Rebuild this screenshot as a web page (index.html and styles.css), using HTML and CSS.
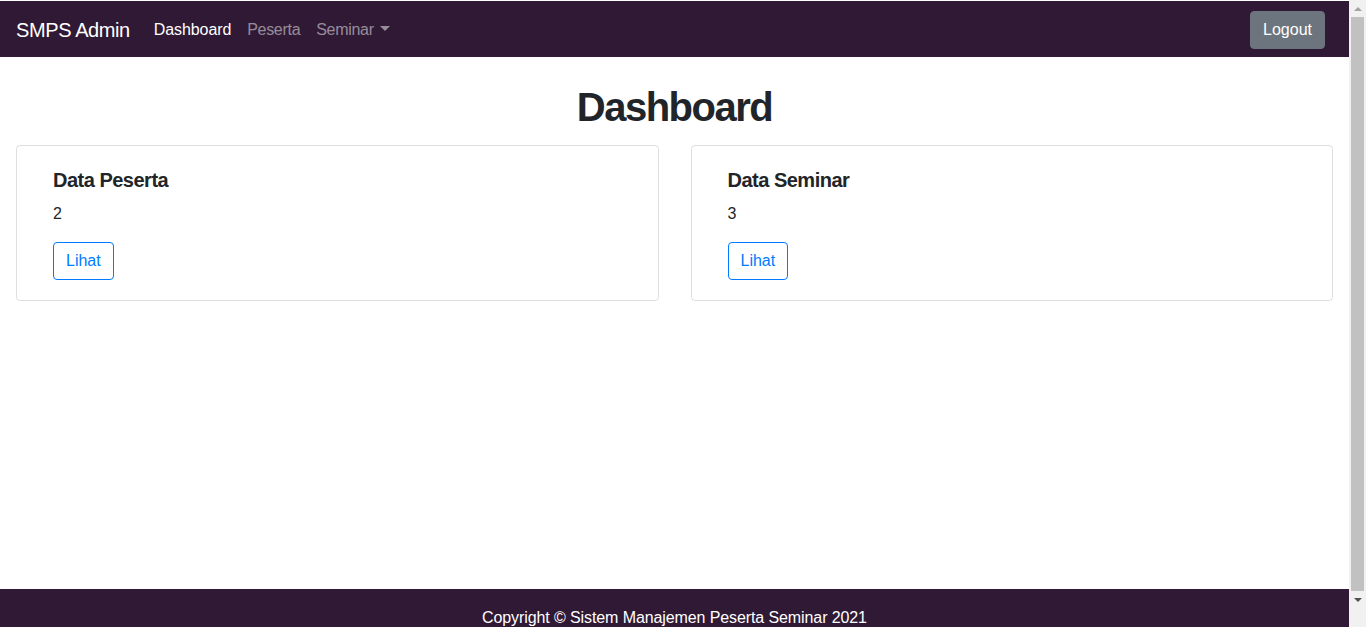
FILE: index.html
```html
<!DOCTYPE html>
<html lang="id">
<head>
<meta charset="utf-8">
<title>SMPS Admin - Dashboard</title>
<link rel="stylesheet" href="styles.css">
</head>
<body>
<nav class="navbar">
  <a class="brand" href="#">SMPS Admin</a>
  <ul class="nav">
    <li><a class="nav-link active" href="#">Dashboard</a></li>
    <li><a class="nav-link" href="#">Peserta</a></li>
    <li><a class="nav-link dropdown-toggle" href="#">Seminar</a></li>
  </ul>
  <button class="btn btn-secondary">Logout</button>
</nav>
<main class="main">
  <h1 class="page-title">Dashboard</h1>
  <div class="cards">
    <div class="card">
      <h5 class="card-title">Data Peserta</h5>
      <p class="card-text">2</p>
      <a class="btn btn-outline" href="#">Lihat</a>
    </div>
    <div class="card">
      <h5 class="card-title">Data Seminar</h5>
      <p class="card-text">3</p>
      <a class="btn btn-outline" href="#">Lihat</a>
    </div>
  </div>
</main>
<footer class="footer">
  <p>Copyright &copy; Sistem Manajemen Peserta Seminar 2021</p>
</footer>
<div class="scrollbar" aria-hidden="true">
  <span class="sb-arrow sb-up"></span>
  <span class="sb-thumb"></span>
  <span class="sb-arrow sb-down"></span>
</div>
</body>
</html>
```

FILE: styles.css
```css
* { box-sizing: border-box; }
html { scrollbar-width: none; }
html::-webkit-scrollbar { display: none; }
body {
  margin: 0;
  padding: 1px 17px 0 0;
  font-family: "Liberation Sans", Arial, sans-serif;
  font-size: 16px;
  line-height: 1.5;
  color: #212529;
  background: #fff;
}
a { text-decoration: none; }

.navbar {
  background: #2f1935;
  height: 56px;
  display: flex;
  align-items: center;
  padding: 1px 24px 0 16px;
}
.brand {
  color: #fff;
  font-size: 20px;
  line-height: 30px;
  margin-right: 16px;
  letter-spacing: -0.4px;
}
.nav {
  display: flex;
  list-style: none;
  margin: 0;
  padding: 0;
  flex: 1;
}
.nav-link {
  display: block;
  padding: 8px;
  color: rgba(255,255,255,.5);
  letter-spacing: -0.3px;
}
.nav-link.active { color: #fff; letter-spacing: -0.1px; }
.dropdown-toggle::after {
  content: "";
  display: inline-block;
  margin-left: 6px;
  vertical-align: 4px;
  border-top: 5px solid;
  border-left: 5px solid transparent;
  border-right: 5px solid transparent;
}

.btn {
  display: inline-block;
  font-family: inherit;
  font-size: 16px;
  line-height: 24px;
  padding: 6px 12px;
  border: 1px solid transparent;
  border-radius: 4px;
  cursor: pointer;
}
.btn-secondary {
  background: #6c757d;
  border-color: #6c757d;
  color: #fff;
}
.btn-outline {
  color: #007bff;
  border-color: #007bff;
  background: transparent;
}

.main {
  min-height: 532px;
  padding: 26px 16px 0;
}
.page-title {
  margin: 0 0 14px;
  text-align: center;
  font-size: 40px;
  line-height: 48px;
  font-weight: 700;
  letter-spacing: -1.5px;
}
.cards {
  display: grid;
  grid-template-columns: 1fr 1fr;
  gap: 32px;
}
.card {
  border: 1px solid rgba(0,0,0,.125);
  border-radius: 4px;
  padding: 20px 36px;
}
.card-title {
  margin: 0 0 10px;
  padding-top: 2px;
  font-size: 20px;
  line-height: 24px;
  font-weight: 700;
  letter-spacing: -0.5px;
}
.card-text { margin: 0 0 16px; }

.footer {
  background: #2f1935;
  color: #fff;
  text-align: center;
  padding: 17px 16px 16px;
  letter-spacing: -0.1px;
}
.footer p { margin: 0; }

.scrollbar {
  position: fixed;
  top: 0;
  right: 0;
  width: 17px;
  height: 100vh;
  background: #f1f1f1;
  display: flex;
  flex-direction: column;
  align-items: center;
}
.sb-arrow {
  height: 17px;
  width: 17px;
  display: flex;
  align-items: center;
  justify-content: center;
}
.sb-arrow::before {
  content: "";
  border-left: 4px solid transparent;
  border-right: 4px solid transparent;
}
.sb-up::before { border-bottom: 4px solid #a3a3a3; }
.sb-down::before { border-top: 4px solid #505050; }
.sb-thumb {
  width: 13px;
  height: 574px;
  background: #c1c1c1;
}
```
